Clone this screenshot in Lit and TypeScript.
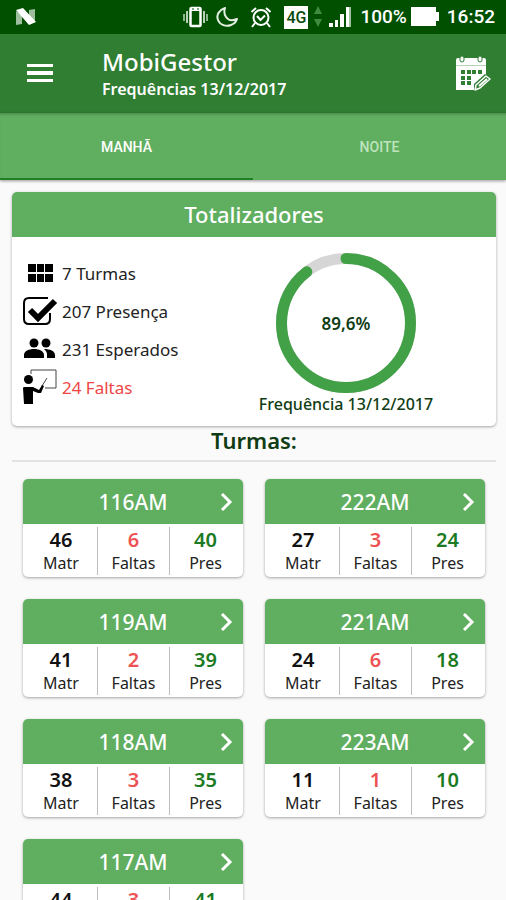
import { LitElement, html, css, svg } from "lit";
import { customElement, property, state } from "lit/decorators.js";
import { classMap } from "lit/directives/class-map.js";

interface Turma {
  nome: string;
  matr: number;
  faltas: number;
  pres: number;
}

const TURMAS: Turma[] = [
  { nome: "116AM", matr: 46, faltas: 6, pres: 40 },
  { nome: "222AM", matr: 27, faltas: 3, pres: 24 },
  { nome: "119AM", matr: 41, faltas: 2, pres: 39 },
  { nome: "221AM", matr: 24, faltas: 6, pres: 18 },
  { nome: "118AM", matr: 38, faltas: 3, pres: 35 },
  { nome: "223AM", matr: 11, faltas: 1, pres: 10 },
  { nome: "117AM", matr: 44, faltas: 3, pres: 41 },
];

@customElement("status-bar")
class StatusBar extends LitElement {
  static styles = css`
    :host {
      display: flex;
      align-items: center;
      height: 34px;
      padding: 0 11px 0 15px;
      background: #005000;
      color: #fff;
      font: 500 19px/34px Roboto, sans-serif;
    }
    svg { display: block; flex: none; }
    .push { margin-left: auto; }
    .gap { margin-right: 8px; }
    .wide { margin-right: 12px; }
    .tight { margin-right: 4px; }
    .net {
      width: 24px;
      height: 23px;
      margin-right: 4px;
      background: #fff;
      color: #0a4a0a;
      font: 500 16px/23px Roboto, sans-serif;
      text-align: center;
    }
  `;
  render() {
    return html`
      <svg width="22" height="18" viewBox="0 0 22 18">
        <path d="M1 3 7 7v9l-6 1zM14 2l6-1v13l-6-3z" fill="#9dbf9d" />
        <path d="M1 2 8 0l13 14-7 3z" fill="#fff" />
      </svg>
      <svg class="push gap" width="25" height="22" viewBox="0 0 25 22">
        <path d="M1 8v7M24 8v7" stroke="#8fb58f" stroke-width="2" />
        <path d="M4 5v12M21 5v12" stroke="#b8d0b8" stroke-width="2" />
        <rect x="7.500" y="2" width="10" height="18" rx="1" fill="none" stroke="#fff" stroke-width="2.500" />
        <path d="M7 2h11v3H7z" fill="#fff" />
        <path d="M9 3h2M14 3h2" stroke="#005000" />
      </svg>
      <svg class="wide" width="22" height="22" viewBox="0 0 22 22" fill="none" stroke="#e3eee3" stroke-width="2">
        <path d="M9 2C3 4 0 9 2 14s8 7 13 5c3-1 5-3 6-6-5 2-9 1-11-2S8 5 9 2z" stroke-linejoin="round" />
      </svg>
      <svg class="wide" width="22" height="22" viewBox="0 0 22 22" fill="none" stroke="#fff" stroke-width="2">
        <circle cx="11" cy="11.500" r="7.500" />
        <path d="M1.500 6 6 2M20.500 6 16 2M5 17l-3 4M17 17l3 4" />
        <path d="m7 10 3.500 4L15 9.500" />
      </svg>
      <span class="net">4G</span>
      <svg class="tight" width="12" height="24" viewBox="0 0 12 24" fill="#3f8a3f">
        <path d="m6 1 4 8H2zM6 22l4-8H2z" />
      </svg>
      <svg class="gap" width="24" height="22" viewBox="0 0 24 22" fill="#fff">
        <path d="M1 17h4v4H1zM7 14h3v7H7zM12 8h4v13h-4z" />
        <path d="M18 1h3v20h-3z" />
        <path d="M21 1h2v20h-2z" fill="#9dbf9d" />
      </svg>
      <span class="tight">100%</span>
      <svg class="gap" width="28" height="20" viewBox="0 0 28 20" fill="#fff">
        <path d="M0 0h25v5h3v9h-3v5H0z" />
      </svg>
      <span>16:52</span>
    `;
  }
}

@customElement("progress-ring")
class ProgressRing extends LitElement {
  @property({ type: Number }) value = 0;
  static styles = css`
    :host {
      display: grid;
      place-items: center;
      width: 140px;
      height: 140px;
    }
    svg, span { grid-area: 1 / 1; }
    span { color: #103c14; font-size: 17px; font-weight: 600; }
  `;
  render() {
    const label = this.value.toFixed(1).replace(".", ",") + "%";
    return html`
      <svg width="140" height="140" viewBox="0 0 140 140" fill="none" stroke-width="11">
        <circle cx="70" cy="70" r="64.500" stroke="#d6d6d6" />
        ${svg`<circle cx="70" cy="70" r="64.500" stroke="#42a047" stroke-linecap="round"
          pathLength="100" stroke-dasharray="${this.value} 100" transform="rotate(-90 70 70)" />`}
      </svg>
      <span>${label}</span>
    `;
  }
}

@customElement("turma-card")
class TurmaCard extends LitElement {
  @property({ attribute: false }) turma!: Turma;
  static styles = css`
    :host {
      display: block;
      overflow: hidden;
      border-radius: 5px;
      background: #fff;
      box-shadow: 0 1px 3px rgba(0, 0, 0, 0.35);
    }
    button {
      display: grid;
      grid-template-columns: 34px 1fr 34px;
      align-items: center;
      width: 100%;
      height: 45px;
      padding: 0;
      border: 0;
      background: #60ae5f;
      color: #fff;
      font: inherit;
      font-size: 21px;
      font-weight: 500;
      line-height: 30px;
      cursor: pointer;
    }
    .nome { grid-column: 2; }
    svg { display: block; margin: auto; }
    dl {
      display: grid;
      grid-template-columns: repeat(3, 1fr);
      margin: 0;
      padding: 3px 2px 2px;
    }
    dl div {
      display: flex;
      flex-direction: column-reverse;
      justify-content: center;
      align-items: center;
      height: 48px;
    }
    dl div + div { border-left: 1px solid #bdbdbd; }
    dt { color: #222; font-size: 16px; line-height: 22px; }
    dd { margin: 0; color: #111; font-size: 20px; font-weight: 600; line-height: 24px; }
    .faltas { color: #ee5353; }
    .pres { color: #1b7a22; }
  `;
  render() {
    const t = this.turma;
    return html`
      <button>
        <span class="nome">${t.nome}</span>
        <svg width="14" height="20" viewBox="0 0 14 20" fill="none" stroke="#fff" stroke-width="3">
          <path d="m3 2 8 8-8 8" />
        </svg>
      </button>
      <dl>
        <div><dt>Matr</dt><dd>${t.matr}</dd></div>
        <div><dt>Faltas</dt><dd class="faltas">${t.faltas}</dd></div>
        <div><dt>Pres</dt><dd class="pres">${t.pres}</dd></div>
      </dl>
    `;
  }
}

@customElement("app-root")
class AppRoot extends LitElement {
  @state() private turno = "MANHÃ";
  static styles = css`
    :host {
      display: flex;
      flex-direction: column;
      height: 100vh;
      background: #fafafa;
      font-family: "Noto Sans", sans-serif;
    }
    svg { display: block; }
    .toolbar {
      display: flex;
      align-items: center;
      flex: none;
      height: 79px;
      padding: 0 15px 0 26px;
      background: #2f7e32;
      color: #fff;
    }
    .icon {
      display: block;
      padding: 0;
      border: 0;
      background: none;
      color: inherit;
      cursor: pointer;
    }
    .titles { flex: 1; margin-left: 48px; }
    h1, h2, p, ul { margin: 0; }
    h1 { font-size: 24px; font-weight: 500; line-height: 30px; }
    .subtitle { font-size: 16px; font-weight: 600; line-height: 24px; }
    .tabs {
      display: flex;
      flex: none;
      z-index: 1;
      background: #60ae5f;
      box-shadow: 0 1px 3px rgba(0, 0, 0, 0.4), inset 0 3px 3px -2px rgba(0, 0, 0, 0.25);
    }
    .tab {
      flex: 1;
      height: 67px;
      padding: 2px 0 0;
      border: 0;
      border-bottom: 2px solid transparent;
      background: none;
      color: #bfe3bd;
      font: 500 14px/20px Roboto, sans-serif;
      cursor: pointer;
    }
    .tab.active { border-color: #1f8024; color: #fff; }
    main {
      flex: 1;
      min-height: 0;
      overflow-y: auto;
      scrollbar-width: none;
      padding: 12px 10px 12px 12px;
    }
    .summary {
      overflow: hidden;
      border-radius: 5px;
      background: #fff;
      box-shadow: 0 1px 3px rgba(0, 0, 0, 0.35);
    }
    .summary h2 {
      background: #60ae5f;
      color: #fff;
      font-size: 22px;
      font-weight: 500;
      line-height: 45px;
      text-align: center;
    }
    .body {
      display: grid;
      grid-template-columns: 188px 1fr;
      padding: 16px 0 11px 10px;
    }
    ul { padding: 1px 0 0; list-style: none; }
    li {
      display: flex;
      align-items: center;
      gap: 4px;
      height: 38px;
      color: #222;
      font-size: 17px;
    }
    li svg { width: 36px; height: 36px; flex: none; }
    .missing { color: #ee4545; }
    .freq { display: flex; flex-direction: column; align-items: center; padding-right: 14px; }
    .freq p { color: #103c14; font-size: 16px; font-weight: 500; line-height: 22px; }
    .heading {
      padding-bottom: 5px;
      border-bottom: 2px solid #e2e2e2;
      color: #103c14;
      font-size: 22px;
      font-weight: 600;
      line-height: 29px;
      text-align: center;
    }
    .grid {
      display: grid;
      grid-template-columns: 1fr 1fr;
      gap: 22px;
      padding: 17px 11px 22px;
    }
  `;

  private tab(nome: string) {
    const active = this.turno === nome;
    return html`<button
      role="tab"
      aria-selected=${active ? "true" : "false"}
      class=${classMap({ tab: true, active })}
      @click=${() => (this.turno = nome)}
    >${nome}</button>`;
  }

  render() {
    return html`
      <status-bar></status-bar>
      <header class="toolbar">
        <button class="icon" aria-label="Menu">
          <svg width="28" height="20" viewBox="0 0 28 20" fill="#fff">
            <path d="M1 0h26v3H1zM1 7h26v4H1zM1 15h26v3H1z" />
          </svg>
        </button>
        <div class="titles">
          <h1>MobiGestor</h1>
          <p class="subtitle">Frequências 13/12/2017</p>
        </div>
        <button class="icon" aria-label="Calendário">
          <svg width="36" height="36" viewBox="0 0 36 36">
            <path d="M1 4q0-2 2-2h26q2 0 2 2v5H1z" fill="#fff" />
            <path d="M1 10h30v9L20 29v5H1z" fill="#fff" />
            <path d="M1 9h30v1H1z" fill="#b5d2b6" />
            <g fill="#fff" stroke="#2f7e32">
              <rect x="5" y="0" width="4" height="6" rx="2" />
              <rect x="23" y="0" width="4" height="6" rx="2" />
            </g>
            <path d="M6 14h4v4H6zM12 14h4v4h-4zM17 14h4v4h-4zM23 14h4v4h-4zM6 20h4v4H6zM12 20h4v4h-4zM6 25h4v4H6zM12 25h4v4h-4z" fill="#2f7e32" />
            <path d="M19 34v-6l11-10 6 5-12 11z" fill="#2f7e32" />
            <path d="m21 29 10-9 4 3-10 9-5 2z" fill="#2f7e32" stroke="#fff" stroke-width="1.500" stroke-linejoin="round" />
            <path d="m24 30 8-7" stroke="#fff" stroke-width="2" />
          </svg>
        </button>
      </header>
      <nav class="tabs" role="tablist">${this.tab("MANHÃ")}${this.tab("NOITE")}</nav>
      <main>
        <section class="summary">
          <h2>Totalizadores</h2>
          <div class="body">
            <ul>
              <li>
                <svg viewBox="0 0 36 36"><path d="M6 9h8v8H6zM15 9h7v8h-7zM23 9h8v8h-8zM6 19h8v8H6zM15 19h7v8h-7zM23 19h8v8h-8z" /></svg>
                7 Turmas
              </li>
              <li>
                <svg viewBox="0 0 36 36" fill="none" stroke="#000">
                  <path d="M26 5H7Q2 5 2 10v16q0 5 5 5h16q5 0 5-5v-6" stroke-width="2" />
                  <path d="m8 17 8 8L33 8" stroke-width="6" />
                </svg>
                207 Presença
              </li>
              <li>
                <svg viewBox="0 0 36 36">
                  <circle cx="12" cy="12" r="4.500" /><circle cx="24" cy="12" r="4.500" />
                  <path d="M2 27v-3c0-4 5-6 10-6s10 2 10 6v3zM25 27v-3c0-3-1-4-3-6 6 0 11 2 11 6v3z" />
                </svg>
                231 Esperados
              </li>
              <li class="missing">
                <svg viewBox="0 0 36 36">
                  <path d="M9 5V1h25v18H23" fill="none" stroke="#444" />
                  <path d="m20 17 5-8" stroke="#444" />
                  <circle cx="6.500" cy="10.500" r="4.500" />
                  <path d="M1 19q0-1 2-1h8l6 3 3-5 2 1-3 7h-3l-5-2v13H2z" />
                </svg>
                24 Faltas
              </li>
            </ul>
            <div class="freq">
              <progress-ring .value=${89.6}></progress-ring>
              <p>Frequência 13/12/2017</p>
            </div>
          </div>
        </section>
        <h2 class="heading">Turmas:</h2>
        <section class="grid">
          ${TURMAS.map((t) => html`<turma-card .turma=${t}></turma-card>`)}
        </section>
      </main>
    `;
  }
}
